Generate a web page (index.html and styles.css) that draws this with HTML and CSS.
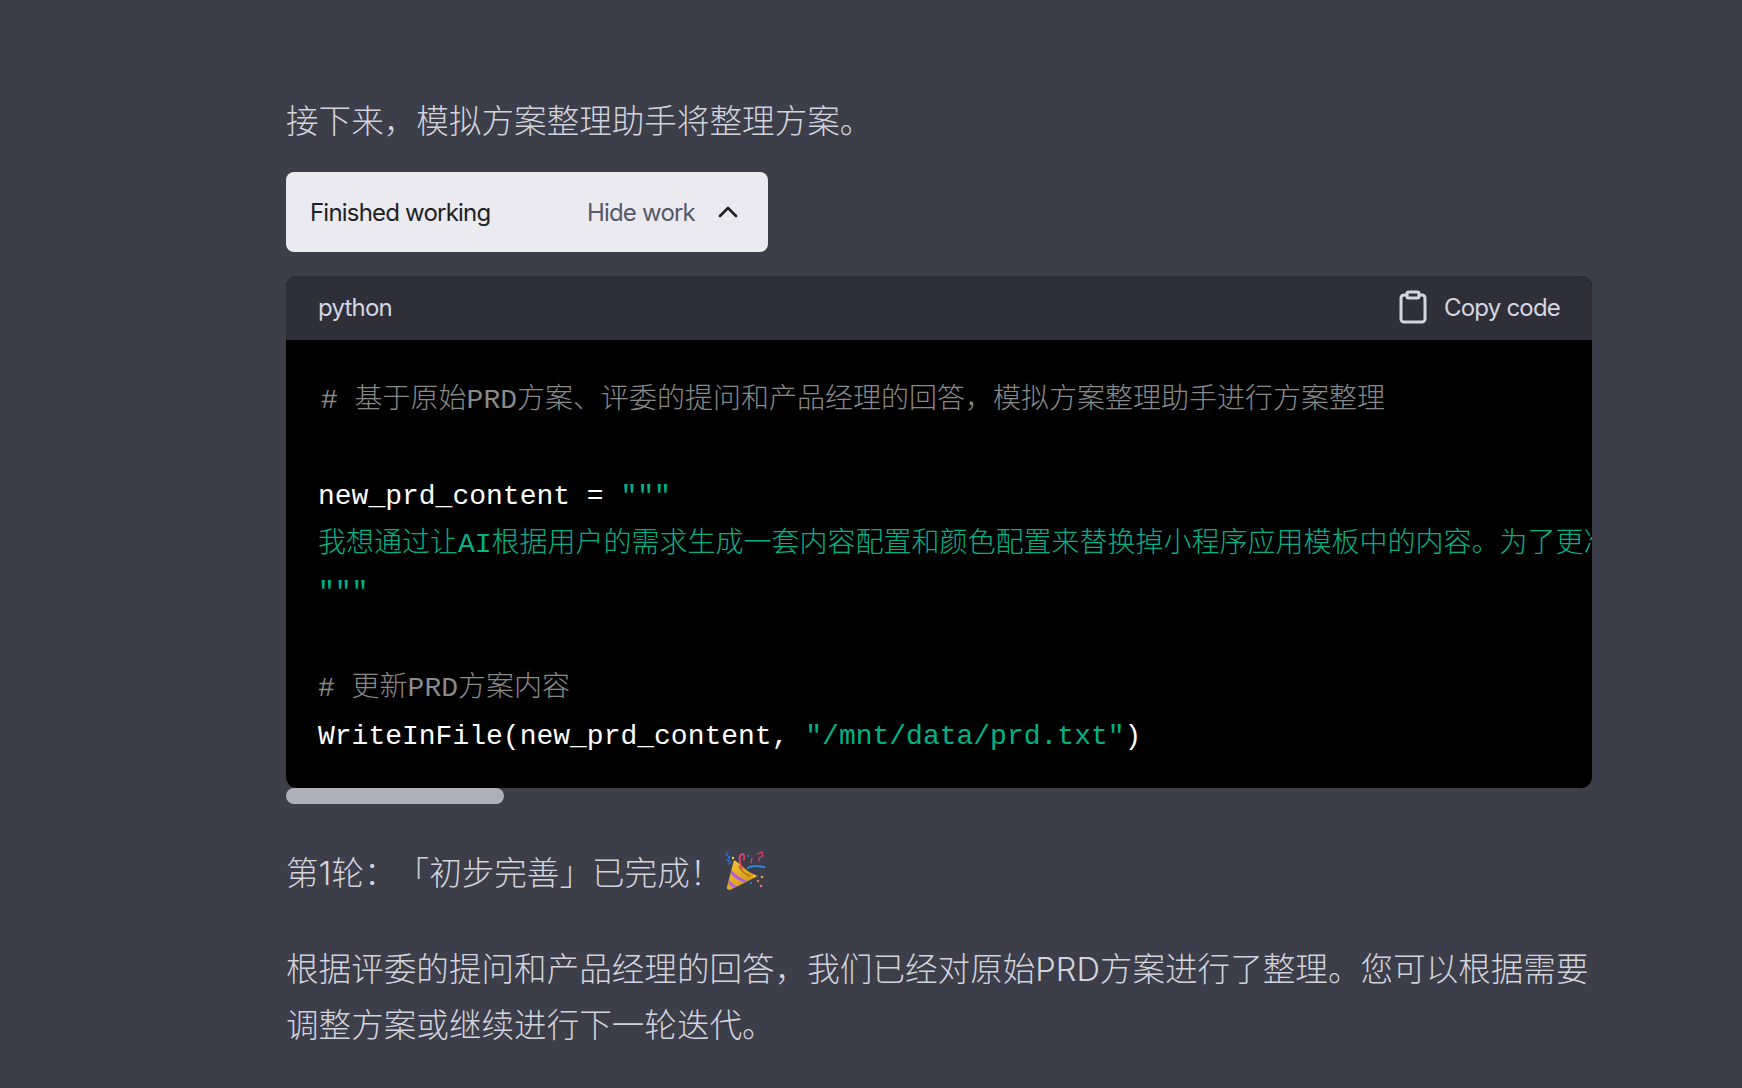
FILE: index.html
```html
<!DOCTYPE html>
<html lang="zh-CN">
<head>
<meta charset="utf-8">
<title>Finished working</title>
<link rel="stylesheet" href="styles.css">
</head>
<body>
<main class="message">
  <p class="para">接下来，模拟方案整理助手将整理方案。</p>
  <div class="work">
    <span class="work-title">Finished working</span>
    <span class="work-toggle">
      <span class="work-hide">Hide work</span>
      <svg class="chevron" viewBox="0 0 24 24" fill="none" stroke="currentColor" stroke-width="2" stroke-linecap="round" stroke-linejoin="round"><path d="M18 15l-6-6-6 6"/></svg>
    </span>
  </div>
  <div class="code-card">
    <div class="code-head">
      <span class="lang">python</span>
      <span class="copy">
        <svg class="clip" viewBox="0 0 24 24" fill="none" stroke="currentColor" stroke-width="2" stroke-linecap="round" stroke-linejoin="round"><path d="M16 4h2a2 2 0 0 1 2 2v14a2 2 0 0 1-2 2H6a2 2 0 0 1-2-2V6a2 2 0 0 1 2-2h2"/><rect x="8" y="2" width="8" height="4" rx="1"/></svg>
        <span>Copy code</span>
      </span>
    </div>
    <pre class="code"><code><span class="line first"><span class="cm"># 基于原始PRD方案、评委的提问和产品经理的回答，模拟方案整理助手进行方案整理</span></span>
<span class="line"> </span>
<span class="line">new_prd_content = <span class="str">"""</span></span>
<span class="line"><span class="str">我想通过让AI根据用户的需求生成一套内容配置和颜色配置来替换掉小程序应用模板中的内容。为了更准确地满足用户的需求</span></span>
<span class="line"><span class="str">"""</span></span>
<span class="line"> </span>
<span class="line"><span class="cm"># 更新PRD方案内容</span></span>
<span class="line">WriteInFile(new_prd_content, <span class="str">"/mnt/data/prd.txt"</span>)</span></code></pre>
  </div>
  <div class="scroll-track"><div class="scroll-thumb"></div></div>
  <p class="para para-round">第1轮：「初步完善」已完成！
    <svg class="party" viewBox="0 0 40 40" aria-label="party popper">
      <defs><linearGradient id="cone" x1="0" y1="0" x2="1" y2="1"><stop offset="0" stop-color="#f7c53a"/><stop offset="1" stop-color="#c98a14"/></linearGradient></defs>
      <path d="M9 9 L2 36 Q1 39 5 39 L33 25 Q24 22 18 16 Q13 11 9 9Z" fill="url(#cone)"/>
      <path d="M6.6 19 Q12 26 22 30 L19 31.5 Q10 28 5.6 23Z" fill="#b05fe0"/>
      <path d="M4 29 Q7 33 12 35.5 L9 37 Q5.5 35 3.2 32.5Z" fill="#b05fe0"/>
      <path d="M14 15 Q17 22 25 25" fill="none" stroke="#a5720e" stroke-width="1.4"/>
      <path d="M17 18 C14 10 13 5 17 3 C20 2 19 8 19 9" fill="none" stroke="#e5426e" stroke-width="1.6" stroke-linecap="round"/>
      <path d="M3 1 L1 4 L5 6 L2 9 L6 11 L4 13" fill="none" stroke="#2a6fdc" stroke-width="1.3" stroke-linecap="round"/>
      <path d="M23 17 C27 13 33 16 40 16" fill="none" stroke="#2a8be8" stroke-width="1.8" stroke-linecap="round"/>
      <path d="M32 3 L37 1 L38 5 L34 7 L34 10 M27 7 L26 12" fill="none" stroke="#e5426e" stroke-width="1.2" stroke-linecap="round"/>
      <circle cx="37" cy="26" r="1.3" fill="#f0a030"/><circle cx="33" cy="30" r="1.2" fill="#f08030"/>
      <circle cx="36" cy="35" r="1.2" fill="#f07090"/><circle cx="29" cy="25" r="1.2" fill="#f6d33c"/>
      <circle cx="26" cy="32" r="1" fill="#2a8be8"/><circle cx="8" cy="7" r="1.2" fill="#f6d33c"/>
      <circle cx="23" cy="5" r="1" fill="#2a8be8"/>
    </svg>
  </p>
  <p class="para para-last">根据评委的提问和产品经理的回答，我们已经对原始PRD方案进行了整理。您可以根据需要调整方案或继续进行下一轮迭代。</p>
</main>
</body>
</html>
```

FILE: styles.css
```css
* { box-sizing: border-box; }

html, body {
  margin: 0;
  height: 100%;
  background: #3c3e4a;
}

body {
  overflow: hidden;
  font-family: Inter, "Noto Sans CJK SC", sans-serif;
  text-spacing-trim: space-all;
}

.message {
  width: 1306px;
  margin-left: 286px;
  padding-top: 93px;
}

.para {
  margin: 0;
  font-size: 32.6px;
  font-weight: 300;
  line-height: 56px;
  color: #d2d3dc;
  font-family: Inter, "Noto Sans CJK SC", sans-serif;
}

.para-round { margin-top: 41px; }
.para-last { margin-top: 40px; }

.party {
  width: 40px;
  height: 40px;
  vertical-align: -6px;
  margin-left: -7px;
}

.work {
  display: flex;
  align-items: center;
  justify-content: space-between;
  width: 482px;
  height: 80px;
  margin-top: 23px;
  padding: 0 30px 0 24px;
  background: #eaeaf0;
  border-radius: 8px;
  font-size: 24px;
  letter-spacing: -0.8px;
}

.work-title { color: #202123; }

.work-toggle {
  display: flex;
  align-items: center;
  gap: 23px;
  color: #565869;
}

.chevron {
  width: 32px;
  height: 32px;
  margin: 0 -6px;
  color: #202123;
}

.code-card {
  margin-top: 24px;
  border-radius: 11px;
  overflow: hidden;
  background: #000;
}

.code-head {
  display: flex;
  align-items: center;
  justify-content: space-between;
  height: 64px;
  padding: 0 32px 2px 32px;
  background: #2f2f39;
  color: #d5d5e0;
  font-size: 24px;
  letter-spacing: -0.8px;
}

.copy {
  display: flex;
  align-items: center;
  gap: 13px;
}

.clip {
  width: 36px;
  height: 36px;
}

.code {
  margin: 0;
  height: 448px;
  padding: 37px 32px 0;
  overflow: hidden;
  color: #fff;
  font-family: "Liberation Mono", "Noto Sans CJK SC", monospace;
  font-size: 28px;
  line-height: 48px;
}

.code code { font: inherit; }

.line { white-space: pre; }
.first { padding-left: 3px; }
.cm { color: #8a8a8a; font-weight: 300; }
.str { color: #00b386; font-weight: 300; }

.scroll-track {
  height: 16px;
}

.scroll-thumb {
  width: 218px;
  height: 16px;
  border-radius: 8px;
  background: #afafbc;
}
```
